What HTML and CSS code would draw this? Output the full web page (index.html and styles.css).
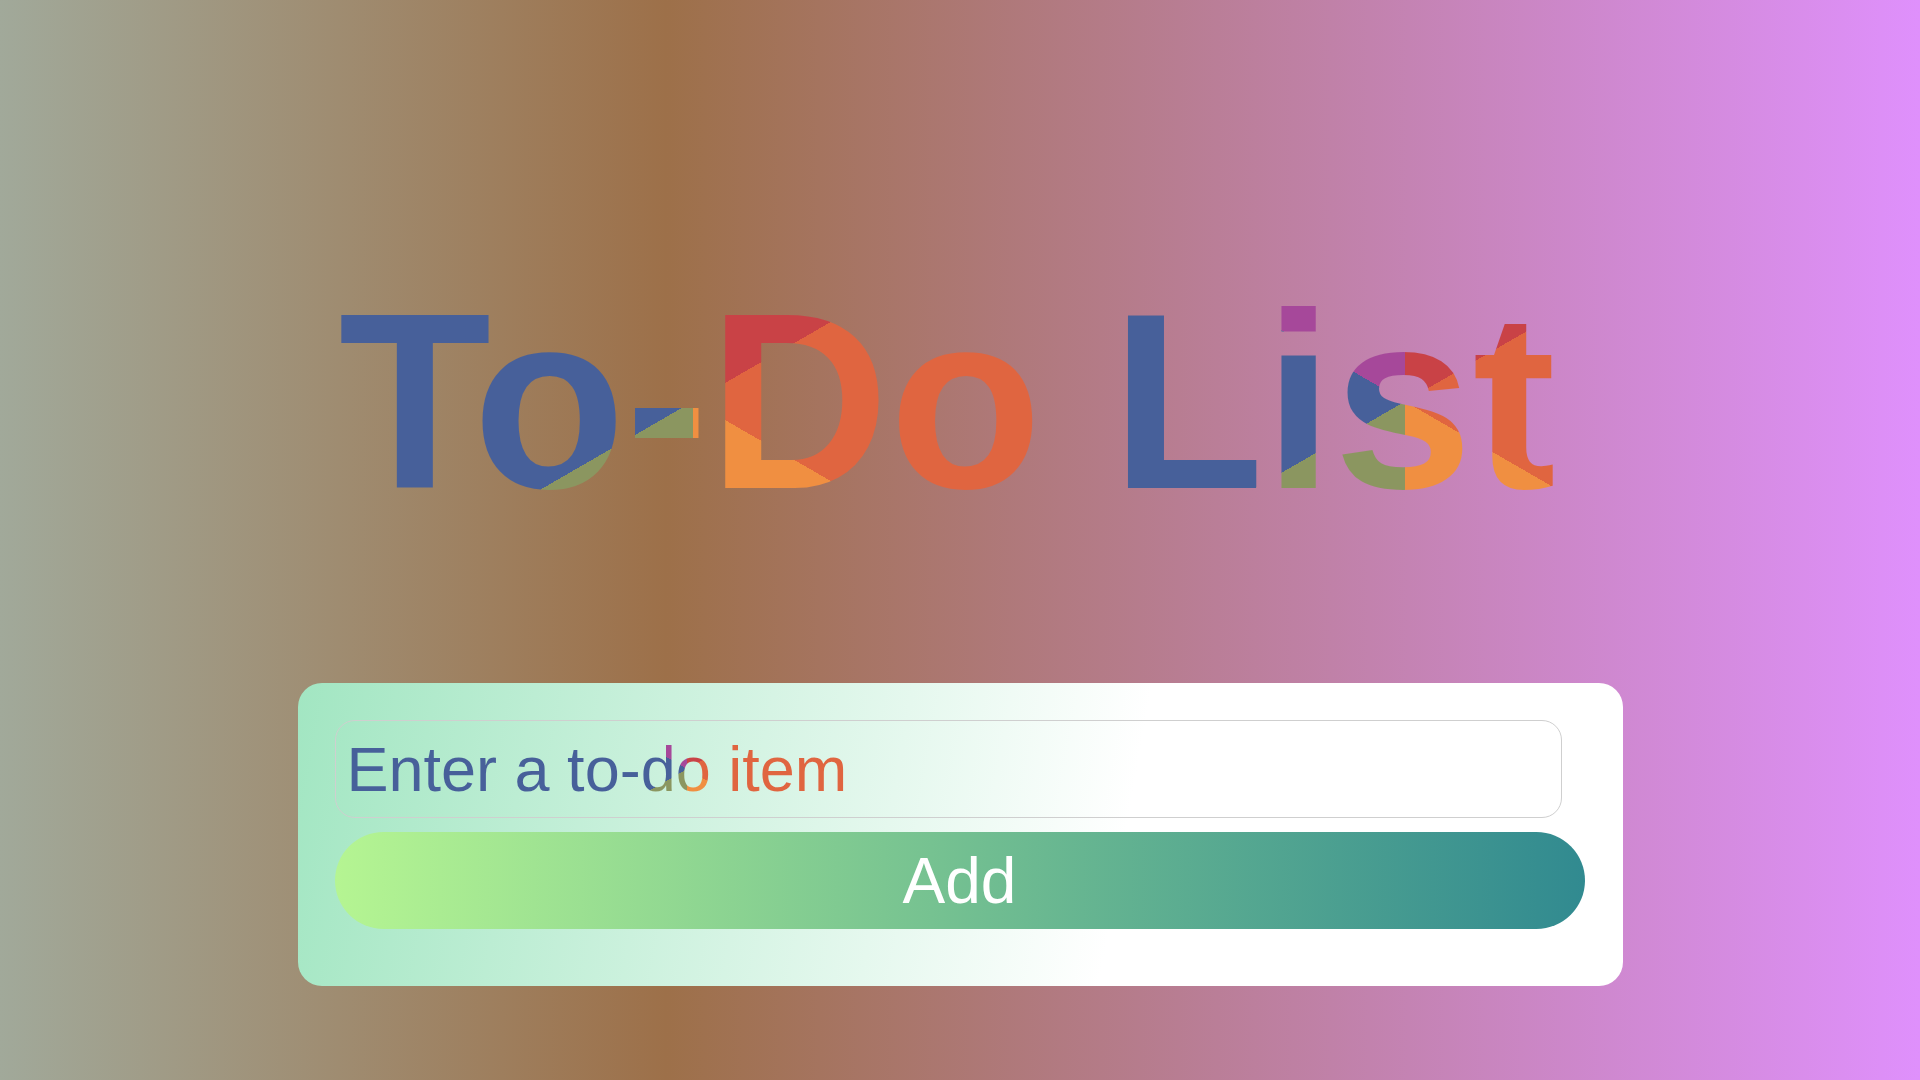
FILE: index.html
```html
<!DOCTYPE html>
<html lang="en">
<head>
<meta charset="utf-8">
<title>To-Do List</title>
<link rel="stylesheet" href="styles.css">
</head>
<body>
  <main class="app">
    <h1 class="title"><span class="title-text">To-Do List</span></h1>
    <section class="card">
      <input class="todo-input" type="text" placeholder="Enter a to-do item">
      <button class="add-btn" type="button">Add</button>
    </section>
  </main>
</body>
</html>
```
FILE: styles.css
```css
html, body {
  margin: 0;
  padding: 0;
}

body {
  min-height: 100vh;
  background: linear-gradient(to right, #a1a99a 0%, #9d7049 34.7%, #df90fc 100%);
  font-family: "Liberation Sans", Arial, sans-serif;
}

.app {
  width: 1325px;
  margin: 0 auto;
  padding-top: 252px;
}

.title {
  margin: 0;
  padding-left: 41px;
  font-size: 250px;
  font-weight: bold;
  line-height: 300px;
  text-align: left;
  white-space: nowrap;
}

.title-text {
  background-image: conic-gradient(#c94246 0deg 60deg, #e06540 60deg 120deg, #f08f41 120deg 180deg, #8b9660 180deg 240deg, #47609a 240deg 300deg, #a6489a 300deg 360deg);
  background-size: 712px 100%;
  background-position: -2px 0;
  background-repeat: repeat-x;
  -webkit-background-clip: text;
  background-clip: text;
  color: transparent;
}

.card {
  margin-top: 131px;
  box-sizing: border-box;
  width: 1325px;
  padding: 37px 37px 57px;
  border-radius: 24px;
  background: linear-gradient(100deg, #a2e6c2 0%, #fff 62%);
  display: flex;
  flex-direction: column;
  align-items: flex-start;
  gap: 14px;
}

.todo-input {
  box-sizing: border-box;
  width: 1227px;
  height: 98px;
  margin: 0;
  padding: 0 11px;
  border: 1px solid #cfcfcf;
  border-radius: 20px;
  background: transparent;
  font-family: "Liberation Sans", Arial, sans-serif;
  font-size: 63px;
  color: #333;
  outline: none;
}

.todo-input::placeholder {
  color: transparent;
  opacity: 1;
  background-image: conic-gradient(#c94246 0deg 60deg, #e06540 60deg 120deg, #f08f41 120deg 180deg, #8b9660 180deg 240deg, #47609a 240deg 300deg, #a6489a 300deg 360deg);
  background-size: 680px 100%;
  background-position: 0 50%;
  background-repeat: repeat-x;
  -webkit-background-clip: text;
  background-clip: text;
}

.add-btn {
  box-sizing: border-box;
  width: 1250px;
  height: 97px;
  margin: 0;
  padding: 0;
  border: none;
  border-radius: 49px;
  background: linear-gradient(to right, #b5f592, #318a90);
  color: #fff;
  font-family: "Liberation Sans", Arial, sans-serif;
  font-size: 64px;
  cursor: pointer;
}
```
